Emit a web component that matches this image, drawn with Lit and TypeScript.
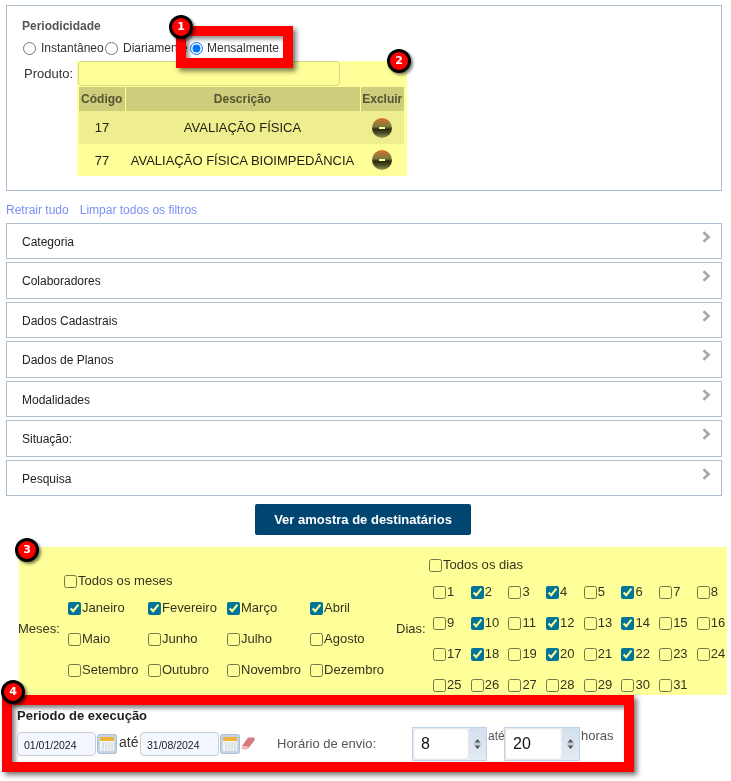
import { LitElement, html, css, svg } from "lit";
import { customElement } from "lit/decorators.js";

const MONTHS = ["Janeiro","Fevereiro","Março","Abril","Maio","Junho","Julho","Agosto","Setembro","Outubro","Novembro","Dezembro"];
const CHECKED_MONTHS = new Set(["Janeiro","Fevereiro","Março","Abril"]);
const CHECKED_DAYS = new Set([2,4,6,10,12,14,18,20,22]);
const FILTERS = ["Categoria","Colaboradores","Dados Cadastrais","Dados de Planos","Modalidades","Situação:","Pesquisa"];

const calendar = svg`<svg class="cal" width="20" height="20" viewBox="0 0 20 20">
  <rect x=".5" y=".5" width="19" height="19" rx="2" fill="#c3d5e6" stroke="#a9bfd4"/>
  <rect x="3" y="3" width="14" height="4" fill="#efb23c"/>
  <rect x="3" y="7" width="14" height="10" fill="#f4f6f8"/>
  <path d="M6 8v9M9 8v9M12 8v9M15 8v9" stroke="#c5ccd4" stroke-width="1"/>
</svg>`;

const eraser = svg`<svg class="eraser" width="14" height="15" viewBox="0 0 14 15">
  <path d="M1 10 L7 1.5 H13.5 L8 11 Z" fill="#d9777f"/>
  <path d="M1 10 L8 11 L6.5 13.5 H1.5 L.5 12 Z" fill="#f0b8bc"/>
  <path d="M8 11 L13.5 1.5 L13.5 4 L6.5 13.5 Z" fill="#b9525c"/>
</svg>`;

const chevron = svg`<svg class="chev" width="9" height="12" viewBox="0 0 9 12"><path d="M1.5 1.2 L6.6 6 L1.5 10.8" fill="none" stroke="#a8a8a8" stroke-width="2.6"/></svg>`;

@customElement("app-root")
export class AppRoot extends LitElement {
  static styles = css`
    :host { display: block; position: relative; width: 731px; height: 781px; overflow: hidden; background: #fff;
      font-family: "Liberation Sans", Arial, sans-serif; color: #333; }
    * { box-sizing: border-box; }
    input[type="checkbox"], input[type="radio"] { margin: 0; width: 13px; height: 13px; flex: none; }

    .top { margin: 5px 9px 0 6px; height: 186px; border: 1px solid #aebdcc; padding: 12px 0 0 15px; }
    .title { font-size: 12px; font-weight: bold; color: #555; line-height: 16px; }
    .radios { display: flex; margin: 6px 0 0 1px; height: 16px; align-items: center; font-size: 12px; }
    .radios label { display: flex; align-items: center; }
    .radios input { margin-right: 5px; }
    .r1 { width: 82px; }
    .r2 { width: 85px; }
    .radios .r3 input { margin-right: 4px; }
    .product { display: flex; margin: 5px 0 0 2px; }
    .product > .lbl { width: 54px; font-size: 13px; line-height: 26px; }
    .pcol { position: relative; width: 326px; }
    .pinput { display: block; width: 262px; height: 25px; background: #fff; border: 1px solid #d8d8d8; border-radius: 4px; }
    table { border-collapse: collapse; margin: 1px 0 0 1px; width: 325px; table-layout: fixed; font-size: 13px; }
    th { background: #cdcdcd; font-size: 12px; height: 24px; color: #555; padding: 0; border-right: 1px solid #fff; }
    th:last-child { border-right: 0; }
    td { height: 33px; text-align: center; padding: 0; color: #222; white-space: nowrap; }
    tr.alt td { background: #eee; }
    tr.last td { height: 32px; }
    .mark { position: absolute; left: -1px; top: 0; width: 330px; height: 115px; background: #ff9; mix-blend-mode: multiply; pointer-events: none; }
    .minus { display: inline-flex; width: 20px; height: 20px; border-radius: 50%; align-items: center; justify-content: center;
      vertical-align: middle; background: linear-gradient(#e0704a 0%, #a87458 20%, #7c7c6c 42%, #2a2a1c 56%, #4c4c3c 75%, #9a9a88 100%); }
    .minus i { display: block; width: 6px; height: 2px; background: #fff; }

    .links { margin: 12px 0 0 6px; height: 14px; font-size: 12px; line-height: 14px; color: #7b8ff7; display: flex; gap: 11px; }
    .filters { margin: 6px 9px 0 6px; display: flex; flex-direction: column; gap: 3.1px; }
    .filter { height: 36.4px; border: 1px solid #aebdcc; padding: 0 10px 0 15px; display: flex; justify-content: space-between;
      font-size: 12px; color: #222; line-height: 36px; }
    .chev { margin-top: 7px; }
    .send { display: block; margin: 8px 0 0 255px; width: 216px; height: 31px; background: #004671; color: #fff; border: 0; border-radius: 2px;
      font: bold 13px "Liberation Sans", Arial, sans-serif; padding: 0; }

    .sched { position: relative; margin: 12px 0 0 18px; width: 709px; height: 148px; padding-top: 10px; display: flex; overflow: hidden;
      font-size: 13px; color: #333; }
    .sched > * { flex: none; }
    .sched .mark { left: 1px; width: 708px; height: 148px; }
    .sched label { display: flex; align-items: center; gap: 1px; line-height: 16px; }
    .side { align-self: center; margin-top: 5px; }
    .meses { width: 46px; }
    .mblock { width: 332px; padding-top: 16px; }
    .mgrid { margin: 3.5px 0 0 4px; display: grid; grid-template-columns: 80px 79px 83px auto; grid-auto-rows: 31px; align-items: center; }
    .dias { width: 33px; }
    .all { letter-spacing: .05px; }
    .dgrid { margin: 3.5px 0 0 4px; display: grid; grid-template-columns: repeat(8, 37.7px); grid-auto-rows: 31px; align-items: center; }

    .exec { margin-left: 2px; width: 632px; height: 77px; border: 10px solid #f00; padding: 3px 0 0 5px;
      box-shadow: 3px 3px 5px rgba(0,0,0,.55), inset 3px 3px 4px rgba(0,0,0,.5); position: relative; }
    .exec h4 { margin: 0; font-size: 13px; line-height: 16px; color: #222; }
    .erow { display: flex; align-items: flex-start; margin-top: 3px; font-size: 13px; }
    .date { width: 79px; height: 24px; margin-top: 5px; border: 1px solid #ccc; border-radius: 4px; background: #f3f7ff; font-size: 10.5px;
      line-height: 24px; padding-left: 6px; color: #222; }
    .cal { margin: 7px 0 0 1px; flex: none; }
    .ate1 { margin: 7px 1px 0 2px; font-size: 14px; line-height: 16px; width: 20px; }
    .eraser { margin: 9px 0 0 1px; }
    .hor { margin: 9px 0 0 22px; width: 135px; line-height: 16px; color: #555; }
    .spin { display: flex; width: 75px; height: 34px; border: 1px solid #bcd2ea; background: #fff; flex: none; }
    .spin.second { width: 76px; }
    .spin .val { flex: 1; margin: 0; border-radius: 4px; box-shadow: inset 0 0 2px #aaa; font-size: 16px; line-height: 32px; padding-left: 8px; color: #111; }
    .spin .btn { width: 17px; background: linear-gradient(#d4e0ee, #e3ebf3); display: flex; align-items: center; justify-content: center; }
    .ate2 { margin: 0 1px; line-height: 16px; font-size: 12px; padding-top: 1px; width: 15px; color: #555; }
    .horas { line-height: 16px; padding-top: 1px; color: #555; margin-left: 1px; }

    .callout { position: absolute; left: 176px; top: 26px; width: 117px; height: 42px; border: 10px solid #f00; pointer-events: none;
      box-shadow: 3px 3px 5px rgba(0,0,0,.55), inset 3px 3px 4px rgba(0,0,0,.45); }
    .badge { position: absolute; width: 24px; height: 24px; border-radius: 50%; background: #f00; border: 3px solid #000; color: #fff;
      font: bold 11px/18px "DejaVu Sans", sans-serif; text-align: center; box-shadow: 2px 2px 3px rgba(0,0,0,.5); }
  `;

  private check(text: string | number, checked: boolean) {
    return html`<label><input type="checkbox" .checked=${checked} />${text}</label>`;
  }

  private spinner(v: string, extra = "") {
    return html`<div class="spin ${extra}"><div class="val">${v}</div><div class="btn">
      <svg width="7" height="12" viewBox="0 0 7 12"><path d="M3.5 1 L6.5 4.5 H.5 Z" fill="#555"/><rect x="0" y="5.5" width="7" height="1" fill="#aaa"/><path d="M.5 7.5 H6.5 L3.5 11 Z" fill="#555"/></svg>
    </div></div>`;
  }

  render() {
    const days = Array.from({ length: 31 }, (_, i) => i + 1);
    return html`
      <section class="top">
        <div class="title">Periodicidade</div>
        <div class="radios">
          <label class="r1"><input type="radio" name="p" />Instantâneo</label>
          <label class="r2"><input type="radio" name="p" />Diariamente</label>
          <label class="r3"><input type="radio" name="p" checked />Mensalmente</label>
        </div>
        <div class="product">
          <div class="lbl">Produto:</div>
          <div class="pcol">
            <div class="pinput"></div>
            <table>
              <colgroup><col style="width:46px" /><col style="width:235px" /><col style="width:44px" /></colgroup>
              <tr><th>Código</th><th>Descrição</th><th>Excluir</th></tr>
              <tr class="alt"><td>17</td><td>AVALIAÇÃO FÍSICA</td><td><span class="minus"><i></i></span></td></tr>
              <tr class="last"><td>77</td><td>AVALIAÇÃO FÍSICA BIOIMPEDÂNCIA</td><td><span class="minus"><i></i></span></td></tr>
            </table>
            <div class="mark"></div>
          </div>
        </div>
      </section>

      <div class="links"><span>Retrair tudo</span><span>Limpar todos os filtros</span></div>

      <div class="filters">
        ${FILTERS.map((f) => html`<div class="filter"><span>${f}</span>${chevron}</div>`)}
      </div>

      <button class="send">Ver amostra de destinatários</button>

      <section class="sched">
        <div class="side meses">Meses:</div>
        <div class="mblock">
          <label class="all"><input type="checkbox" />Todos os meses</label>
          <div class="mgrid">${MONTHS.map((m) => this.check(m, CHECKED_MONTHS.has(m)))}</div>
        </div>
        <div class="side dias">Dias:</div>
        <div>
          <label class="all"><input type="checkbox" />Todos os dias</label>
          <div class="dgrid">${days.map((d) => this.check(d, CHECKED_DAYS.has(d)))}</div>
        </div>
        <div class="mark"></div>
      </section>

      <section class="exec">
        <h4>Periodo de execução</h4>
        <div class="erow">
          <div class="date">01/01/2024</div>${calendar}
          <div class="ate1">até</div>
          <div class="date">31/08/2024</div>${calendar}${eraser}
          <div class="hor">Horário de envio:</div>
          ${this.spinner("8")}
          <div class="ate2">até</div>
          ${this.spinner("20", "second")}
          <div class="horas">horas</div>
        </div>
      </section>

      <div class="callout"></div>
      <div class="badge" style="left:169px;top:15px">1</div>
      <div class="badge" style="left:387px;top:49px">2</div>
      <div class="badge" style="left:15px;top:538px">3</div>
      <div class="badge" style="left:1px;top:680px">4</div>
    `;
  }
}
